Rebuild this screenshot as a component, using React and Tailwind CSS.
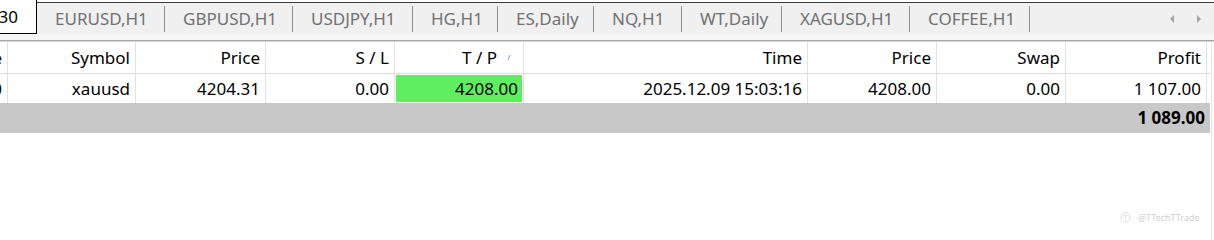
import React from 'react';

const tabs = [
  { name: 'EURUSD,H1', w: 'w-[128px]' },
  { name: 'GBPUSD,H1', w: 'w-[128px]' },
  { name: 'USDJPY,H1', w: 'w-[120px]' },
  { name: 'HG,H1', w: 'w-[85px]' },
  { name: 'ES,Daily', w: 'w-[96px]' },
  { name: 'NQ,H1', w: 'w-[88px]' },
  { name: 'WT,Daily', w: 'w-[100px]' },
  { name: 'XAGUSD,H1', w: 'w-[128px]' },
  { name: 'COFFEE,H1', w: 'w-[120px]' },
];

const cols = 'grid grid-cols-[8px_128px_130px_129px_129px_284px_129px_129px_141px]';

function Cell({ children, className = '' }) {
  return (
    <div className={`flex items-center justify-end pr-[5px] border-r border-[#e2e2e2] overflow-hidden whitespace-nowrap ${className}`}>
      {children}
    </div>
  );
}

function TabBar() {
  return (
    <div className="flex h-[34px]">
      {/* active tab, scrolled partly out of view */}
      <div className="w-[37px] h-full bg-white border-r border-b border-black flex items-center justify-end pr-[18px] text-black overflow-hidden">
        30
      </div>
      <div className="flex-1 mt-[2px] border-t border-[#3c3c3c] bg-[#f0f0f0] flex items-center">
        {tabs.map((t) => (
          <div key={t.name} className={`${t.w} h-full flex items-center`}>
            <span className="flex-1 pl-[18px] text-[#707070] whitespace-nowrap">{t.name}</span>
            <span className="w-px h-[26px] bg-[#8c8c8c]" />
          </div>
        ))}
        <div className="flex-1" />
        <div className="flex items-center gap-[23px] pr-[13px]">
          <svg width="4" height="8" viewBox="0 0 4 8">
            <path d="M4 0 L0 4 L4 8 Z" fill="#a6a6a6" />
          </svg>
          <svg width="4" height="8" viewBox="0 0 4 8">
            <path d="M0 0 L4 4 L0 8 Z" fill="#a6a6a6" />
          </svg>
        </div>
      </div>
    </div>
  );
}

export default function App() {
  return (
    <div
      className="w-[1214px] h-[240px] bg-white overflow-hidden text-[17px] text-black relative"
      style={{ fontFamily: '"Noto Sans", "Open Sans", sans-serif' }}
    >
      <TabBar />
      <div className="h-[6px] bg-[#f6f6f6]" />
      <div className="h-px bg-[#a8a8a8]" />
      <div className="h-px bg-[#d6d6d6]" />
      <div className="flex">
        <div className="w-[1210px]">
          <div className={`${cols} h-[32px] border-b border-[#dcdcdc]`}>
            <Cell className="pr-[2px]">e</Cell>
            <Cell>Symbol</Cell>
            <Cell>Price</Cell>
            <Cell>S / L</Cell>
            <Cell className="pr-[10px]">
              <span>T / P</span>
              <svg width="14" height="10" viewBox="0 0 14 10" className="ml-[2px]">
                <path d="M11 2 L9 7" stroke="#9a9a9a" strokeWidth="1" />
              </svg>
            </Cell>
            <Cell>Time</Cell>
            <Cell>Price</Cell>
            <Cell>Swap</Cell>
            <Cell className="pr-[1px]">Profit</Cell>
          </div>
          <div className={`${cols} h-[29px]`}>
            <Cell className="pr-[2px]">0</Cell>
            <Cell>xauusd</Cell>
            <Cell>4204.31</Cell>
            <Cell>0.00</Cell>
            <div className="border-r border-[#e2e2e2] p-px">
              <div className="h-full bg-[#5fee5f] flex items-center justify-end pr-[4px]">4208.00</div>
            </div>
            <Cell>2025.12.09 15:03:16</Cell>
            <Cell>4208.00</Cell>
            <Cell>0.00</Cell>
            <Cell className="pr-[1px]">1 107.00</Cell>
          </div>
          <div className="h-[30px] bg-[#c8c8c8] flex items-center justify-end pr-[5px] font-bold">
            1 089.00
          </div>
        </div>
        <div className="flex-1 h-[200px] border-l border-[#e4e4e4] ml-px" />
      </div>
      <div className="absolute left-[1120px] top-[211px] flex items-center gap-[7px] text-[9px] text-[#d0d0d0]">
        <svg width="11" height="11" viewBox="0 0 12 12">
          <circle cx="6" cy="6" r="5" fill="none" stroke="#dcdcdc" strokeWidth="1" />
          <path d="M4 4 L8 4 M6 4 L6 9" stroke="#dcdcdc" strokeWidth="1" />
        </svg>
        <span>@TTechTTrade</span>
      </div>
    </div>
  );
}
